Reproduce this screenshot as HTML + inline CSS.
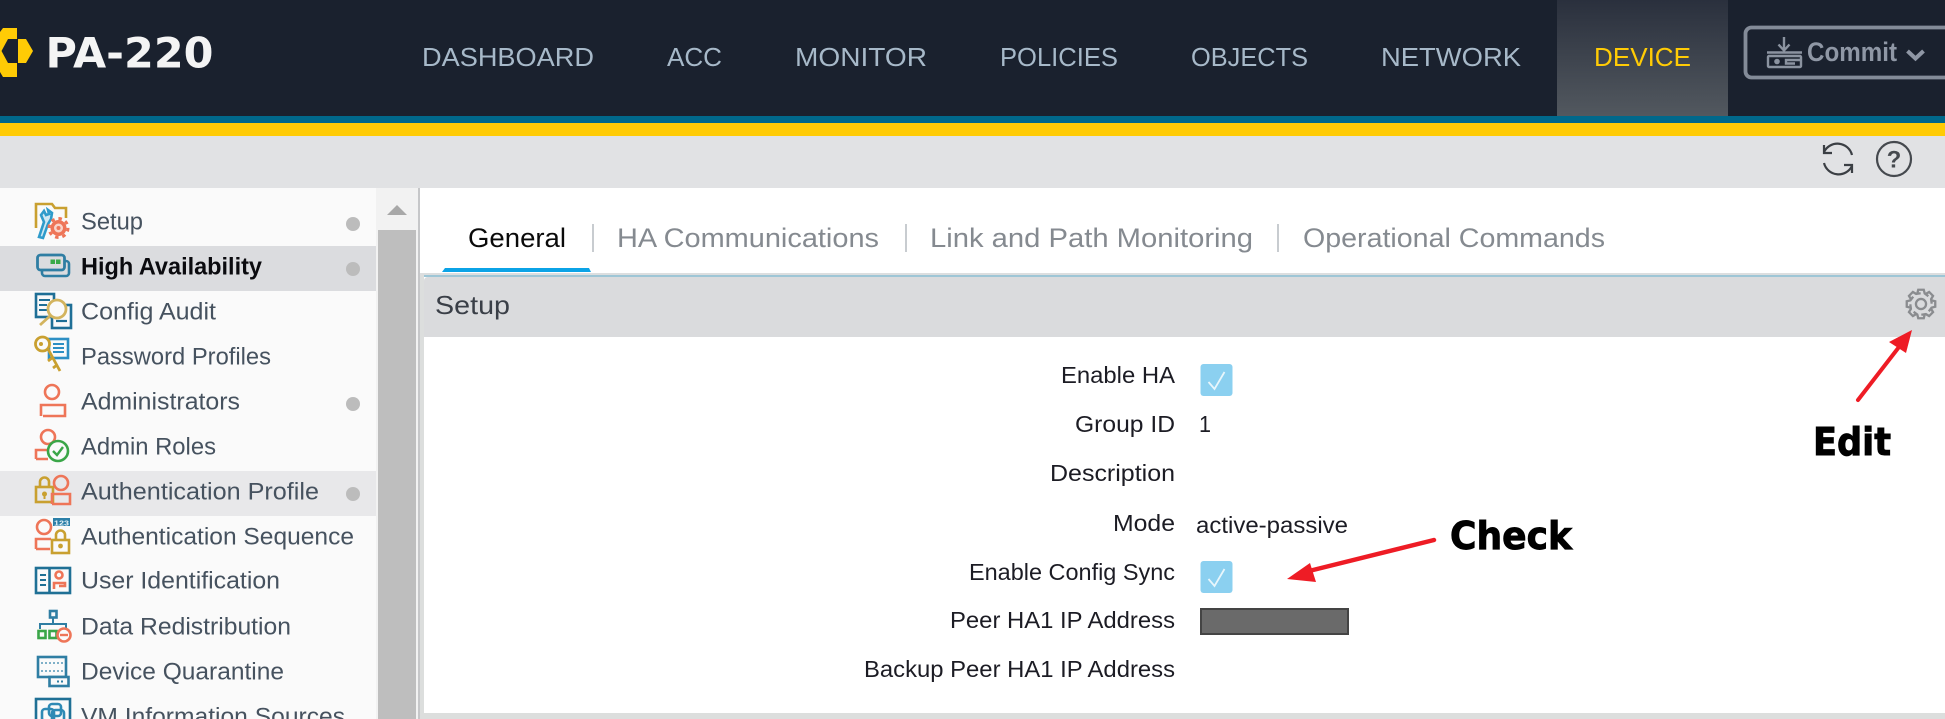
<!DOCTYPE html>
<html lang="en"><head><meta charset="utf-8"><title>PA-220 Device High Availability</title>
<style>
html,body{margin:0;padding:0;width:1945px;height:719px;overflow:hidden;background:#fff}
svg{display:block}
text{font-family:"Liberation Sans",sans-serif}
.nav{font-size:26px;fill:#a7b9c9}
.side{font-size:24px;fill:#46525f}
.tab{font-size:27px;fill:#858a90}
.lab{font-size:23px;fill:#1c1c24}
.big{font-family:"DejaVu Sans","Liberation Sans",sans-serif;font-weight:bold;font-size:38px;fill:#000;stroke:#000;stroke-width:.9}
.i{fill:none;stroke-width:2.6}
</style></head><body>
<svg width="1945" height="719" viewBox="0 0 1945 719" xmlns="http://www.w3.org/2000/svg">
<defs><linearGradient id="dv" x1="0" y1="0" x2="0" y2="1"><stop offset="0" stop-color="#2a303d"/><stop offset="1" stop-color="#52585f"/></linearGradient></defs>
<!-- header -->
<rect width="1945" height="116" fill="#1a212e"/>
<rect y="116" width="1945" height="7" fill="#00688b"/>
<rect y="123" width="1945" height="13" fill="#ffcb05"/>
<rect y="136" width="1945" height="52" fill="#e1e2e4"/>
<!-- logo -->
<path d="M0 32L3 28H17V77H3L0 72Z" fill="#ffcb05"/>
<path d="M1.5 51L8 39H17V63H8Z" fill="#1a212e"/>
<path d="M18 39H26L33 51L26 63H18Z" fill="#ffcb05"/>
<text x="45.500" y="67.500" font-size="42" font-weight="bold" fill="#f4f4f4" style="font-family:'DejaVu Sans','Liberation Sans',sans-serif" textLength="168" lengthAdjust="spacingAndGlyphs">PA-220</text>
<!-- nav -->
<rect x="1557" width="171" height="116" fill="url(#dv)"/>
<text class="nav" x="422" y="66" textLength="172" lengthAdjust="spacingAndGlyphs">DASHBOARD</text>
<text class="nav" x="667" y="66" textLength="55" lengthAdjust="spacingAndGlyphs">ACC</text>
<text class="nav" x="795" y="66" textLength="132" lengthAdjust="spacingAndGlyphs">MONITOR</text>
<text class="nav" x="1000" y="66" textLength="118" lengthAdjust="spacingAndGlyphs">POLICIES</text>
<text class="nav" x="1191" y="66" textLength="117" lengthAdjust="spacingAndGlyphs">OBJECTS</text>
<text class="nav" x="1381" y="66" textLength="140" lengthAdjust="spacingAndGlyphs">NETWORK</text>
<text class="nav" x="1594" y="66" textLength="97" lengthAdjust="spacingAndGlyphs" style="fill:#ffcb05">DEVICE</text>
<!-- commit -->
<rect x="1745.500" y="27.500" width="205" height="50" rx="6" fill="none" stroke="#838b98" stroke-width="3.800"/>
<g fill="none" stroke="#8b93a0" stroke-width="2.400">
<path d="M1784 37V50M1778.500 44.500L1784 50.500L1789.500 44.500M1767 52.500H1802"/>
<rect x="1768" y="56" width="33" height="11" rx="1"/>
<path d="M1801 60H1786V63.500H1795"/>
</g>
<circle cx="1777" cy="61.500" r="2.800" fill="#8b93a0"/>
<text x="1807" y="61" font-size="27" font-weight="bold" fill="#8f97a5" textLength="90" lengthAdjust="spacingAndGlyphs">Commit</text>
<path d="M1907.500 51L1915.500 58.500L1923.500 51" fill="none" stroke="#8f97a5" stroke-width="4"/>
<!-- refresh/help -->
<g fill="none" stroke="#3b3f44" stroke-width="2.200">
<path d="M1824 152A15 15 0 0 1 1852 155"/>
<path d="M1852 166A15 15 0 0 1 1824 163"/>
<path d="M1824 145V153H1832"/>
<path d="M1852 173V165H1844"/>
<circle cx="1894" cy="159" r="17" stroke="#45494e"/>
</g>
<text x="1894" y="167.500" font-size="24" font-weight="bold" fill="#45494e" text-anchor="middle">?</text>
<!-- sidebar -->
<rect y="188" width="376" height="531" fill="#fafafa"/>
<rect y="246" width="376" height="45" fill="#dbdcdf"/>
<rect y="471" width="376" height="45" fill="#e8e8ea"/>
<rect x="376" y="188" width="42" height="531" fill="#f2f2f2"/>
<path d="M387 215H407L397 205Z" fill="#a8a8a8"/>
<rect x="378" y="230" width="38" height="489" fill="#bebebe"/>
<rect x="418" y="188" width="2" height="531" fill="#c6c7c9"/>
<text class="side" x="81" y="229.500" textLength="62" lengthAdjust="spacingAndGlyphs">Setup</text>
<text class="side" x="81" y="274.500" textLength="181" lengthAdjust="spacingAndGlyphs" font-weight="bold" style="fill:#0b0b0f">High Availability</text>
<text class="side" x="81" y="319.500" textLength="135" lengthAdjust="spacingAndGlyphs">Config Audit</text>
<text class="side" x="81" y="364.500" textLength="190" lengthAdjust="spacingAndGlyphs">Password Profiles</text>
<text class="side" x="81" y="409.500" textLength="159" lengthAdjust="spacingAndGlyphs">Administrators</text>
<text class="side" x="81" y="454.500" textLength="135" lengthAdjust="spacingAndGlyphs">Admin Roles</text>
<text class="side" x="81" y="499.500" textLength="238" lengthAdjust="spacingAndGlyphs">Authentication Profile</text>
<text class="side" x="81" y="544.500" textLength="273" lengthAdjust="spacingAndGlyphs">Authentication Sequence</text>
<text class="side" x="81" y="588.500" textLength="199" lengthAdjust="spacingAndGlyphs">User Identification</text>
<text class="side" x="81" y="634.500" textLength="210" lengthAdjust="spacingAndGlyphs">Data Redistribution</text>
<text class="side" x="81" y="679.500" textLength="203" lengthAdjust="spacingAndGlyphs">Device Quarantine</text>
<text class="side" x="81" y="724.500" textLength="264" lengthAdjust="spacingAndGlyphs">VM Information Sources</text>
<g fill="#bcbcbc"><circle cx="353" cy="224" r="7"/><circle cx="353" cy="269" r="7"/><circle cx="353" cy="404" r="7"/><circle cx="353" cy="494" r="7"/></g>
<!-- sidebar icons -->
<!-- setup -->
<path class="i" d="M36 228V204H52L55 208H66V218" stroke="#c9a030"/>
<path d="M39 237L44 222L41 215L44 211L46 215L49 214L48 210L52 213L51 219L48 224L43 238Z" fill="#cfe8f3" stroke="#2e9bcb" stroke-width="2.600"/>
<circle cx="58.500" cy="228" r="8" fill="#ee7558"/>
<circle cx="58.500" cy="228" r="9.500" fill="none" stroke="#ee7558" stroke-width="3" stroke-dasharray="3.500 3.900"/>
<circle cx="58.500" cy="228" r="4.500" fill="#f9d4ca"/>
<circle cx="58.500" cy="228" r="2" fill="#ee7558"/>
<!-- HA -->
<rect x="42" y="261" width="27" height="15" rx="3" class="i" stroke="#2f7ea3" stroke-width="2.800"/>
<rect x="37.500" y="255" width="27" height="15" rx="3" fill="#dbdcdf" stroke="#2f7ea3" stroke-width="2.800"/>
<rect x="50.500" y="259.500" width="4.500" height="4.500" fill="#3aaa48"/><rect x="56" y="259.500" width="4.500" height="4.500" fill="#3aaa48"/>
<!-- config audit -->
<rect x="36" y="294" width="18" height="23" fill="#fafafa" stroke="#1f6f96" stroke-width="2.600"/>
<path d="M39 300H50M39 305H47M39 310H47" stroke="#1f6f96" stroke-width="2"/>
<rect x="52" y="305" width="19" height="23" fill="#fafafa" stroke="#1f6f96" stroke-width="2.600"/>
<path d="M56 321H67" stroke="#1f6f96" stroke-width="2.200"/>
<circle cx="57" cy="309" r="9" fill="#fafafa" stroke="#d3b45e" stroke-width="2.800"/>
<path d="M50 316L40 325" stroke="#d3b45e" stroke-width="2.800"/>
<!-- password -->
<rect x="49" y="339" width="19" height="19" fill="#fafafa" stroke="#2d8fc4" stroke-width="2.600"/>
<path d="M53 344H64M53 348H64M53 352H64" stroke="#2d8fc4" stroke-width="2"/>
<path d="M48 349L60 371M52 358L48 361M57 365L53 368" stroke="#c9a030" stroke-width="2.800" fill="none"/>
<circle cx="42.500" cy="344" r="7" fill="#fafafa" stroke="#c9a030" stroke-width="2.800"/>
<circle cx="41" cy="344" r="2" fill="#c9a030"/>
<!-- admin -->
<circle cx="52" cy="392" r="7" class="i" stroke="#ee7558"/>
<path class="i" d="M41 416V405H65V416H43" stroke="#ee7558"/>
<!-- roles -->
<circle cx="48" cy="437" r="7" class="i" stroke="#ee7558"/>
<path class="i" d="M36 459V450H49M36 459H48" stroke="#ee7558"/>
<circle cx="58" cy="451" r="10" fill="#fafafa" stroke="#3aa648" stroke-width="2.600"/>
<path d="M53 451L57 455L63 447" fill="none" stroke="#3aa648" stroke-width="2.400"/>
<!-- auth profile -->
<rect x="36" y="487" width="17" height="15" fill="#e8e8ea" stroke="#c9a030" stroke-width="2.600"/>
<path class="i" d="M40 487V482A4.500 4.500 0 0 1 49 482V487" stroke="#c9a030"/>
<circle cx="44.500" cy="494" r="2.500" fill="#c9a030"/><rect x="43.500" y="495" width="2" height="4" fill="#c9a030"/>
<circle cx="61" cy="483" r="7" class="i" stroke="#ee7558"/>
<path class="i" d="M52 504V494H70V504H52" stroke="#ee7558"/>
<!-- auth seq -->
<circle cx="44" cy="527" r="7" class="i" stroke="#ee7558"/>
<path class="i" d="M36 549V539H51M36 549H50" stroke="#ee7558"/>
<rect x="53" y="518" width="17" height="8" fill="#2b7fa8"/>
<text x="54" y="525.500" font-size="7.500" font-weight="bold" fill="#e6f0f5" textLength="15" lengthAdjust="spacingAndGlyphs">123</text>
<rect x="52" y="540" width="17" height="13" fill="#fafafa" stroke="#c9a030" stroke-width="2.600"/>
<path class="i" d="M56 540V535A4.500 4.500 0 0 1 65 535V540" stroke="#c9a030"/>
<circle cx="60.500" cy="546" r="2.400" fill="#c9a030"/>
<!-- user id -->
<rect x="36" y="568" width="34" height="25" class="i" stroke="#1f7095" stroke-width="2.600"/>
<path d="M49.500 568V593" stroke="#1f7095" stroke-width="2.600"/>
<path d="M40 575H46M40 580H46M40 585H46" stroke="#1f7095" stroke-width="2"/>
<circle cx="59" cy="575" r="3.500" class="i" stroke="#ee7558"/>
<path class="i" d="M54 589V583H65V586H59" stroke="#ee7558"/>
<!-- data redistribution -->
<rect x="50" y="611" width="6.500" height="6.500" class="i" stroke="#2f7ea3"/>
<path d="M53 618V624M40 629V624H66V629" fill="none" stroke="#2f7ea3" stroke-width="2"/>
<rect x="38.500" y="631" width="7" height="7" class="i" stroke="#3aa648"/>
<rect x="49.500" y="631" width="7" height="7" class="i" stroke="#3aa648"/>
<circle cx="64" cy="635" r="6.500" fill="#fafafa" stroke="#ee7558" stroke-width="2.600"/>
<path d="M60 635H68" stroke="#ee7558" stroke-width="2.400"/>
<!-- device quarantine -->
<rect x="38" y="657" width="28" height="20" class="i" stroke="#2f7ea3"/>
<path d="M41 663H63M41 671H63" stroke="#7fb0c8" stroke-width="2" stroke-dasharray="2 2"/>
<rect x="49.500" y="677" width="19" height="9" fill="#fafafa" stroke="#2f7ea3" stroke-width="2.600"/>
<path d="M57 681.500H65" stroke="#2f7ea3" stroke-width="2" stroke-dasharray="2 2"/>
<!-- vm info -->
<rect x="36" y="699" width="34" height="30" class="i" stroke="#1f7095" stroke-width="2.600"/>
<g class="i" stroke="#2f8ab5" stroke-width="2"><rect x="42" y="709" width="12" height="12" rx="3"/><rect x="49" y="704" width="12" height="12" rx="3"/><rect x="52" y="710" width="12" height="12" rx="3"/></g>
<!-- tabs -->
<text x="468" y="247" font-size="27" fill="#0a0a0a" textLength="98" lengthAdjust="spacingAndGlyphs">General</text>
<rect x="592" y="224" width="2" height="28" fill="#c8ccd0"/>
<text class="tab" x="617" y="247" textLength="262" lengthAdjust="spacingAndGlyphs">HA Communications</text>
<rect x="905" y="224" width="2" height="28" fill="#c8ccd0"/>
<text class="tab" x="930" y="247" textLength="323" lengthAdjust="spacingAndGlyphs">Link and Path Monitoring</text>
<rect x="1277" y="224" width="2" height="28" fill="#c8ccd0"/>
<text class="tab" x="1303" y="247" textLength="302" lengthAdjust="spacingAndGlyphs">Operational Commands</text>
<path d="M442 272L445 268H589L591 272Z" fill="#0ba3e6"/>
<!-- panel -->
<rect x="420" y="273" width="1525" height="2" fill="#dcdedf"/>
<rect x="424" y="275" width="1521" height="2" fill="#9ec6d6"/>
<path d="M424 337V281Q424 277 428 277H1945V337Z" fill="#dadbdd"/>
<rect x="420" y="275" width="4" height="444" fill="#dcdedd"/>
<text x="435" y="314" font-size="26" fill="#3a3f47" textLength="75" lengthAdjust="spacingAndGlyphs">Setup</text>
<rect x="424" y="713" width="1521" height="6" fill="#dcdedd"/>
<!-- gear -->
<g transform="translate(1921 304) scale(.92)" fill="none" stroke="#8a8c8f" stroke-width="2.500">
<circle r="5.500"/>
<path d="M-4 -11.500L-3 -15.500H3L4 -11.500L8 -8.500"/>
<path transform="rotate(45)" d="M-4 -11.500L-3 -15.500H3L4 -11.500L8 -8.500"/>
<path transform="rotate(90)" d="M-4 -11.500L-3 -15.500H3L4 -11.500L8 -8.500"/>
<path transform="rotate(135)" d="M-4 -11.500L-3 -15.500H3L4 -11.500L8 -8.500"/>
<path transform="rotate(180)" d="M-4 -11.500L-3 -15.500H3L4 -11.500L8 -8.500"/>
<path transform="rotate(225)" d="M-4 -11.500L-3 -15.500H3L4 -11.500L8 -8.500"/>
<path transform="rotate(270)" d="M-4 -11.500L-3 -15.500H3L4 -11.500L8 -8.500"/>
<path transform="rotate(315)" d="M-4 -11.500L-3 -15.500H3L4 -11.500L8 -8.500"/>
</g>
<!-- form -->
<text class="lab" x="1175" y="383" text-anchor="end" textLength="114" lengthAdjust="spacingAndGlyphs">Enable HA</text>
<text class="lab" x="1175" y="432" text-anchor="end" textLength="100" lengthAdjust="spacingAndGlyphs">Group ID</text>
<text class="lab" x="1175" y="481" text-anchor="end" textLength="125" lengthAdjust="spacingAndGlyphs">Description</text>
<text class="lab" x="1175" y="531" text-anchor="end" textLength="62" lengthAdjust="spacingAndGlyphs">Mode</text>
<text class="lab" x="1175" y="580" text-anchor="end" textLength="206" lengthAdjust="spacingAndGlyphs">Enable Config Sync</text>
<text class="lab" x="1175" y="628" text-anchor="end" textLength="225" lengthAdjust="spacingAndGlyphs">Peer HA1 IP Address</text>
<text class="lab" x="1175" y="677" text-anchor="end" textLength="311" lengthAdjust="spacingAndGlyphs">Backup Peer HA1 IP Address</text>
<text class="lab" x="1199" y="432" textLength="12" lengthAdjust="spacingAndGlyphs">1</text>
<text class="lab" x="1196" y="533" textLength="152" lengthAdjust="spacingAndGlyphs">active-passive</text>
<rect x="1200.500" y="364" width="32" height="32" rx="3" fill="#8bd0f0"/>
<path d="M1208.500 382L1214.500 389L1224.500 372" fill="none" stroke="#e8f6fc" stroke-width="1.800"/>
<rect x="1200.500" y="561" width="32" height="32" rx="3" fill="#8bd0f0"/>
<path d="M1208.500 579L1214.500 586L1224.500 569" fill="none" stroke="#e8f6fc" stroke-width="1.800"/>
<rect x="1201" y="609" width="147" height="25" fill="#6a6a6a" stroke="#444" stroke-width="2"/>
<!-- annotations -->
<path d="M1434 540L1305 572" fill="none" stroke="#ee1c25" stroke-width="4.500" stroke-linecap="round"/>
<path d="M1287 579L1310 563L1316 582Z" fill="#ee1c25"/>
<path d="M1858 400L1899 347" fill="none" stroke="#ee1c25" stroke-width="4" stroke-linecap="round"/>
<path d="M1912 330L1889 342L1906 353Z" fill="#ee1c25"/>
<text class="big" x="1450" y="549" textLength="122" lengthAdjust="spacingAndGlyphs">Check</text>
<text class="big" x="1813" y="455" textLength="78" lengthAdjust="spacingAndGlyphs">Edit</text>
</svg>
</body></html>
